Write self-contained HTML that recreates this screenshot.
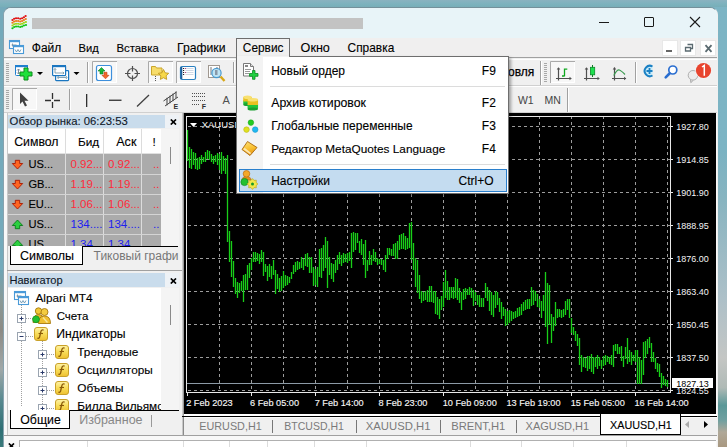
<!DOCTYPE html><html><head><meta charset="utf-8"><style>
*{margin:0;padding:0;box-sizing:border-box}
html,body{width:727px;height:447px;overflow:hidden}
body{background:linear-gradient(90deg,#74aabb,#78afbf 50%,#7cb4c4);font-family:"Liberation Sans",sans-serif;position:relative}
.a{position:absolute}
.t{position:absolute;white-space:nowrap;line-height:0}
</style></head><body>

<div class="a" style="left:0px;top:0px;width:727px;height:7px;background:linear-gradient(#8ab2c0,#7cb2bd 60%,#78aeb8)"></div>
<div class="a" style="left:0px;top:270px;width:3px;height:177px;background:linear-gradient(#6ea4b4,#8a9a98 17%,#8c8a84 34%,#a0a8a8 56%,#5a8a90 73%,#2f6f74 90%,#3a7a7a)"></div>
<div class="a" style="left:718px;top:150px;width:9px;height:297px;background:linear-gradient(#7ab2c2,#88b4c0 17%,#adc0c8 50%,#c4c6c4 70%,#b0bab6 80%,#5a9898 86%,#70a0a0 91%,#b0a898 95%,#a89880)"></div>
<div class="a" style="left:3px;top:7px;width:715px;height:445px;border-radius:8px 8px 0 0;background:#f8f8f8;border:1px solid #87a2ae;border-right-color:#f0f0f0;border-top-color:#74909a"></div>
<div class="a" style="left:4px;top:8px;width:713px;height:30px;border-radius:7px 7px 0 0;background:#e8f4f8"></div>
<div class="a" style="left:32px;top:18px;width:331px;height:11px;background:#c3c3c3"></div>
<svg class="a" style="left:0;top:0" width="40" height="40"><ellipse cx="12.50" cy="20.00" rx="1.15" ry="1.0" fill="#e01414"/><ellipse cx="14.17" cy="18.73" rx="1.15" ry="1.0" fill="#e01414"/><ellipse cx="16.06" cy="18.16" rx="1.15" ry="1.0" fill="#e01414"/><ellipse cx="18.15" cy="18.28" rx="1.15" ry="1.0" fill="#e01414"/><ellipse cx="20.21" cy="18.71" rx="1.15" ry="1.0" fill="#e01414"/><ellipse cx="22.10" cy="18.24" rx="1.15" ry="1.0" fill="#e01414"/><ellipse cx="23.90" cy="17.16" rx="1.15" ry="1.0" fill="#e01414"/><ellipse cx="25.60" cy="15.93" rx="1.15" ry="1.0" fill="#e01414"/><ellipse cx="12.50" cy="22.75" rx="1.15" ry="1.0" fill="#f07818"/><ellipse cx="14.17" cy="21.48" rx="1.15" ry="1.0" fill="#f07818"/><ellipse cx="16.06" cy="20.91" rx="1.15" ry="1.0" fill="#f07818"/><ellipse cx="18.15" cy="21.03" rx="1.15" ry="1.0" fill="#f07818"/><ellipse cx="20.21" cy="21.46" rx="1.15" ry="1.0" fill="#f07818"/><ellipse cx="22.10" cy="20.99" rx="1.15" ry="1.0" fill="#f07818"/><ellipse cx="23.90" cy="19.91" rx="1.15" ry="1.0" fill="#f07818"/><ellipse cx="25.75" cy="18.92" rx="1.15" ry="1.0" fill="#f07818"/><ellipse cx="12.50" cy="25.50" rx="1.15" ry="1.0" fill="#a0d414"/><ellipse cx="14.17" cy="24.23" rx="1.15" ry="1.0" fill="#a0d414"/><ellipse cx="16.06" cy="23.66" rx="1.15" ry="1.0" fill="#a0d414"/><ellipse cx="18.15" cy="23.78" rx="1.15" ry="1.0" fill="#a0d414"/><ellipse cx="20.21" cy="24.21" rx="1.15" ry="1.0" fill="#a0d414"/><ellipse cx="22.10" cy="23.74" rx="1.15" ry="1.0" fill="#a0d414"/><ellipse cx="23.90" cy="22.66" rx="1.15" ry="1.0" fill="#a0d414"/><ellipse cx="25.88" cy="21.97" rx="1.15" ry="1.0" fill="#a0d414"/><ellipse cx="12.50" cy="28.25" rx="1.15" ry="1.0" fill="#14c414"/><ellipse cx="14.17" cy="26.98" rx="1.15" ry="1.0" fill="#14c414"/><ellipse cx="16.06" cy="26.41" rx="1.15" ry="1.0" fill="#14c414"/><ellipse cx="18.15" cy="26.53" rx="1.15" ry="1.0" fill="#14c414"/><ellipse cx="20.21" cy="26.96" rx="1.15" ry="1.0" fill="#14c414"/><ellipse cx="22.10" cy="26.49" rx="1.15" ry="1.0" fill="#14c414"/><ellipse cx="23.90" cy="25.41" rx="1.15" ry="1.0" fill="#14c414"/><ellipse cx="25.97" cy="25.09" rx="1.15" ry="1.0" fill="#14c414"/></svg>
<div class="a" style="left:599px;top:22px;width:10px;height:1px;background:#1a1a1a"></div>
<div class="a" style="left:644px;top:17px;width:10px;height:10px;border:1px solid #1a1a1a;border-radius:1px"></div>
<svg class="a" style="left:689px;top:16px" width="12" height="12"><path d="M1 1L11 11M11 1L1 11" stroke="#1a1a1a" stroke-width="1.1"/></svg>
<div class="a" style="left:4px;top:38px;width:713px;height:19px;background:#f0efef"></div>
<div class="a" style="left:4px;top:57px;width:713px;height:1px;background:#a0a0a0"></div>
<svg class="a" style="left:8px;top:39px" width="17" height="17"><rect x="1.5" y="1.5" width="10" height="8" fill="#fff" stroke="#4a9ad8" stroke-width="1.1"/><rect x="1" y="1" width="11" height="2.2" fill="#4a9ad8"/><path d="M3.5 6h5M4.5 4.5v3" stroke="#6a8aa0" stroke-width="0.8"/><rect x="5.5" y="6.5" width="10" height="8" fill="#fff" stroke="#4a9ad8" stroke-width="1.1"/><rect x="5" y="6" width="11" height="2.2" fill="#4a9ad8"/><path d="M7 10.5l1.5 2.5 1.5-2.5 1.5 2.5 1.5-2.5" stroke="#5a8aa8" stroke-width="0.8" fill="none"/></svg>
<div class="t" style="left:31.8px;top:47.842px;font-size:12.0px;color:#000;-webkit-text-stroke:0.12px currentColor;">Файл</div>
<div class="t" style="left:78.6px;top:48.119px;font-size:11.2px;color:#000;-webkit-text-stroke:0.12px currentColor;">Вид</div>
<div class="t" style="left:116.4px;top:48.050px;font-size:11.4px;color:#000;-webkit-text-stroke:0.12px currentColor;">Вставка</div>
<div class="t" style="left:177px;top:47.773px;font-size:12.2px;color:#000;-webkit-text-stroke:0.12px currentColor;">Графики</div>
<div class="t" style="left:300.6px;top:47.634px;font-size:12.6px;color:#000;-webkit-text-stroke:0.12px currentColor;">Окно</div>
<div class="t" style="left:347.6px;top:47.877px;font-size:11.9px;color:#000;-webkit-text-stroke:0.12px currentColor;">Справка</div>
<div class="a" style="left:236px;top:38px;width:54px;height:19px;background:#f0f0f0;border:1px solid #6e6e6e;border-bottom:none"></div>
<div class="t" style="left:242.8px;top:47.877px;font-size:11.9px;color:#000;-webkit-text-stroke:0.12px currentColor;">Сервис</div>
<div class="a" style="left:662px;top:40px;width:16px;height:16px;background:#fff;border:1px solid #e8e8e8"></div>
<div class="a" style="left:680px;top:40px;width:16px;height:16px;background:#fff;border:1px solid #e8e8e8"></div>
<div class="a" style="left:700px;top:40px;width:16px;height:16px;background:#fff;border:1px solid #e8e8e8"></div>
<div class="a" style="left:666px;top:50px;width:6px;height:2px;background:#666"></div>
<svg class="a" style="left:684px;top:43px" width="10" height="10"><path d="M3.5 1.5h5v4h-2M1.5 4.5h5v3.5h-5z" fill="none" stroke="#5a6a70" stroke-width="1.3"/></svg>
<svg class="a" style="left:704px;top:44px" width="9" height="9"><path d="M1.5 1.2L7.5 7.8M7.5 1.2L1.5 7.8" stroke="#5a6a70" stroke-width="1.8"/></svg>
<div class="a" style="left:4px;top:58px;width:713px;height:27px;background:#f0f0f0"></div>
<div class="a" style="left:4px;top:85px;width:713px;height:1px;background:#d0d0d0"></div>
<div class="a" style="left:4px;top:86px;width:713px;height:26px;background:#f0f0f0"></div>
<div class="a" style="left:4px;top:112px;width:713px;height:1px;background:#d0d0d0"></div>
<svg class="a" style="left:0;top:0" width="727" height="113"><rect x="4" y="59" width="713" height="1" fill="#fff"/><rect x="4" y="86" width="713" height="1" fill="#fff"/><rect x="6" y="63" width="3" height="1" fill="#a8a8a8"/><rect x="6" y="65" width="3" height="1" fill="#a8a8a8"/><rect x="6" y="67" width="3" height="1" fill="#a8a8a8"/><rect x="6" y="69" width="3" height="1" fill="#a8a8a8"/><rect x="6" y="71" width="3" height="1" fill="#a8a8a8"/><rect x="6" y="73" width="3" height="1" fill="#a8a8a8"/><rect x="6" y="75" width="3" height="1" fill="#a8a8a8"/><rect x="6" y="77" width="3" height="1" fill="#a8a8a8"/><rect x="6" y="79" width="3" height="1" fill="#a8a8a8"/><rect x="6" y="81" width="3" height="1" fill="#a8a8a8"/><rect x="6" y="90" width="3" height="1" fill="#a8a8a8"/><rect x="6" y="92" width="3" height="1" fill="#a8a8a8"/><rect x="6" y="94" width="3" height="1" fill="#a8a8a8"/><rect x="6" y="96" width="3" height="1" fill="#a8a8a8"/><rect x="6" y="98" width="3" height="1" fill="#a8a8a8"/><rect x="6" y="100" width="3" height="1" fill="#a8a8a8"/><rect x="6" y="102" width="3" height="1" fill="#a8a8a8"/><rect x="6" y="104" width="3" height="1" fill="#a8a8a8"/><rect x="6" y="106" width="3" height="1" fill="#a8a8a8"/><rect x="6" y="108" width="3" height="1" fill="#a8a8a8"/><rect x="15.5" y="65.5" width="12" height="10" rx="1" fill="#fff" stroke="#1f7fd0"/><rect x="15" y="65" width="13" height="2.2" fill="#1f7fd0"/><path d="M18.5 69v5M17 70.5l1.5-1.5 1.5 1.5M17 72.5l1.5 1.5 1.5-1.5" stroke="#7a8a9a" fill="none" stroke-width="1"/><path d="M24 68h4v4h4v4h-4v4h-4v-4h-4v-4h4z" fill="#1ee03a" stroke="#0d8a1a" stroke-width="1"/><path d="M37 72h6l-3 3z" fill="#000"/><rect x="55.6" y="70.6" width="13" height="10" rx="0.8" fill="#fff" stroke="#1a76c0" stroke-width="1.2"/><path d="M58 77.5h8.5M58.5 76l-1 1.5 1 1.5M66 76l1 1.5-1 1.5" stroke="#7a98a8" stroke-width="0.9" fill="none"/><rect x="52.6" y="65.6" width="13" height="10" rx="0.8" fill="#fff" stroke="#1a76c0" stroke-width="1.2"/><rect x="52" y="65" width="14" height="2.2" fill="#1a76c0"/><path d="M55 68.5v4.5M55 73h8.5M53.8 69.8l1.2-1.3 1.2 1.3M62.8 71.8l1.2 1.2-1.2 1.2" stroke="#7a98a8" stroke-width="0.9" fill="none"/><path d="M73.5 72h6l-3 3z" fill="#000"/><rect x="87" y="62" width="1" height="21" fill="#a0a0a0"/><rect x="88" y="62" width="1" height="21" fill="#fff"/><rect x="92" y="61" width="25" height="22" fill="#f7f7f7"/><path d="M92.5 83V61.5H117" fill="none" stroke="#a9a9a9"/><path d="M93 82.5H116.5V62" fill="none" stroke="#fff"/><rect x="96.5" y="65.5" width="15" height="15" rx="2" fill="#fff" stroke="#3d8fdc" stroke-width="1.2"/><path d="M101.5 67.5l3.5 3.5h-2v3h-3v-3h-2z" fill="#19b83a" stroke="#0e7a26" stroke-width="0.6"/><path d="M105.5 78.8l3.5-3.5h-2v-3h-3v3h-2z" fill="#f26a2a" stroke="#c04010" stroke-width="0.6"/><circle cx="132.5" cy="73.5" r="5" fill="none" stroke="#505050" stroke-width="1.2"/><path d="M132.5 66v5.5M132.5 75.5v5.5M125 73.5h5.5M134.5 73.5h5.5" stroke="#505050" stroke-width="1.2"/><rect x="148" y="61" width="25" height="22" fill="#f7f7f7"/><path d="M148.5 83V61.5H173" fill="none" stroke="#a9a9a9"/><path d="M149 82.5H172.5V62" fill="none" stroke="#fff"/><path d="M151.5 66.5h4l1 1.5h5.5v7h-10.5z" fill="#f7dc6a" stroke="#c9a52a" stroke-width="1"/><path d="M163.5 69.5l1.6 3.3 3.6.5-2.6 2.5.6 3.6-3.2-1.7-3.2 1.7.6-3.6-2.6-2.5 3.6-.5z" fill="#f7d84a" stroke="#c09a20" stroke-width="0.9"/><rect x="155" y="76" width="1" height="1" fill="#555"/><rect x="155" y="78" width="1" height="1" fill="#555"/><rect x="155" y="80" width="1" height="1" fill="#555"/><rect x="176" y="61" width="25" height="22" fill="#f7f7f7"/><path d="M176.5 83V61.5H201" fill="none" stroke="#a9a9a9"/><path d="M177 82.5H200.5V62" fill="none" stroke="#fff"/><rect x="180.5" y="66.5" width="15" height="13" rx="1.5" fill="#fff" stroke="#2a80c0" stroke-width="1.2"/><rect x="180.5" y="67" width="1.8" height="12" fill="#1f5f9a"/><path d="M183 68.5h1.2M183 70.5h1.2M183 72.5h1.2M183 74.5h1.2" stroke="#222"/><path d="M185.5 68.5h8M185.5 70.5h8M185.5 72.5h8M185.5 74.5h8" stroke="#d0d8e4"/><path d="M185 68.5h1M185 72.5h1" stroke="#c04080"/><rect x="208.5" y="65.5" width="11" height="12" fill="#fff" stroke="#a09890"/><path d="M211 67v8M217 67v6" stroke="#555" stroke-width="0.8"/><path d="M220.5 76.5l4 4.5" stroke="#d8a818" stroke-width="2.4"/><circle cx="216.5" cy="73" r="4.6" fill="#bfe4f4" stroke="#4a9ad0" stroke-width="1.2"/><rect x="215" y="70" width="2.5" height="5" fill="#8898a8"/><rect x="233" y="62" width="1" height="21" fill="#a0a0a0"/><rect x="234" y="62" width="1" height="21" fill="#fff"/><rect x="540" y="61" width="1" height="24" fill="#a0a0a0"/><rect x="541" y="61" width="1" height="24" fill="#fff"/><rect x="544" y="63" width="3" height="1" fill="#a8a8a8"/><rect x="544" y="65" width="3" height="1" fill="#a8a8a8"/><rect x="544" y="67" width="3" height="1" fill="#a8a8a8"/><rect x="544" y="69" width="3" height="1" fill="#a8a8a8"/><rect x="544" y="71" width="3" height="1" fill="#a8a8a8"/><rect x="544" y="73" width="3" height="1" fill="#a8a8a8"/><rect x="544" y="75" width="3" height="1" fill="#a8a8a8"/><rect x="544" y="77" width="3" height="1" fill="#a8a8a8"/><rect x="544" y="79" width="3" height="1" fill="#a8a8a8"/><rect x="544" y="81" width="3" height="1" fill="#a8a8a8"/><rect x="550" y="61" width="25" height="22" fill="#f7f7f7"/><path d="M550.5 83V61.5H575" fill="none" stroke="#a9a9a9"/><path d="M551 82.5H574.5V62" fill="none" stroke="#fff"/><path d="M558.5 68v12.5M556.0 78.5h14" stroke="#505050" stroke-width="1.2" fill="none"/><path d="M556.7 69.5l1.8-2.3 1.8 2.3z" fill="#505050"/><path d="M569.5 76.7l2.3 1.8-2.3 1.8z" fill="#505050"/><path d="M586.5 68v12.5M584.0 78.5h14" stroke="#505050" stroke-width="1.2" fill="none"/><path d="M584.7 69.5l1.8-2.3 1.8 2.3z" fill="#505050"/><path d="M597.5 76.7l2.3 1.8-2.3 1.8z" fill="#505050"/><path d="M564.5 68.5v7.8M564.5 69.2h2.8M562 76h2.5" stroke="#10a820" stroke-width="1.3" fill="none"/><path d="M592.5 65v12" stroke="#107a20" stroke-width="1"/><rect x="590.5" y="67.3" width="4.2" height="7.5" fill="#1ee050" stroke="#0e8a2a" stroke-width="0.8"/><path d="M614.5 67.5v13M612 78.5h14" stroke="#505050" stroke-width="1.2" fill="none"/><path d="M612.7 69.5l1.8-2.3 1.8 2.3z" fill="#505050"/><path d="M624 76.7l2.3 1.8-2.3 1.8z" fill="#505050"/><path d="M613.8 75.5Q617 69.5 619.3 70 Q621 70.5 625 74.5" stroke="#3a9a50" stroke-width="1.2" fill="none"/><rect x="635" y="62" width="1" height="21" fill="#a0a0a0"/><rect x="636" y="62" width="1" height="21" fill="#fff"/><path d="M652.5 66.5A5.2 5.2 0 1 0 652.5 75.5" fill="#c8ecfa" stroke="#1a80c4" stroke-width="2"/><path d="M646.5 71h6M649.5 68v6" stroke="#1a80c4" stroke-width="1.8"/><circle cx="672.8" cy="70" r="4" fill="#fff" stroke="#2a6ed0" stroke-width="1.7"/><path d="M669.5 73.5l-3.8 3.8" stroke="#2a6ed0" stroke-width="2.6" stroke-linecap="round"/><path d="M690.5 79.5l0.3 3.2 2.6-2.5" fill="#e4e4e4" stroke="#9a9a9a" stroke-width="0.8"/><circle cx="693" cy="75.3" r="4.8" fill="#ececec" stroke="#a8a8a8" stroke-width="0.9"/><circle cx="703.5" cy="70.5" r="8.3" fill="#f4f4f4"/><circle cx="703.5" cy="70.5" r="7.6" fill="#e8442e"/><path d="M702 67l2.3-1.6v10.4" stroke="#fff" stroke-width="1.5" fill="none"/><rect x="12" y="88" width="25" height="22" fill="#f7f7f7"/><path d="M12.5 110V88.5H37" fill="none" stroke="#a9a9a9"/><path d="M13 109.5H36.5V89" fill="none" stroke="#fff"/><path d="M20 92.5v11.5l2.5-2.5 2.5 5 2-1-2.5-4.8h4z" fill="#404040"/><path d="M52.5 93v6M52.5 102v6M45 100.5h6M54 100.5h6" stroke="#303030" stroke-width="1.3"/><rect x="69" y="89" width="1" height="21" fill="#a0a0a0"/><rect x="70" y="89" width="1" height="21" fill="#fff"/><rect x="86" y="94" width="1.3" height="13" fill="#303030"/><rect x="109" y="99.6" width="12.5" height="1.3" fill="#303030"/><path d="M137 106.5L149 95" stroke="#404040" stroke-width="1.3"/><path d="M163.5 101L176.5 92M165 106L178 97" stroke="#454545" stroke-width="1"/><path d="M167 97.8v7.5M170 95.7v7.5M173 93.6v7.5M176 91.5v6.5" stroke="#454545" stroke-width="1"/><text x="173.6" y="108.8" font-family="Liberation Sans" font-weight="bold" font-size="7" fill="#303030">E</text><path d="M192 93.5H205.5" stroke="#505050" stroke-dasharray="1 1"/><path d="M192 96.5H205.5" stroke="#505050" stroke-dasharray="1 1"/><path d="M192 100.5H205.5" stroke="#505050" stroke-dasharray="1 1"/><path d="M192 104.5H200" stroke="#505050" stroke-dasharray="1 1"/><text x="201.8" y="108.9" font-family="Liberation Sans" font-weight="bold" font-size="7" fill="#303030">F</text><text x="222.5" y="104.4" font-family="Liberation Sans" font-size="11" fill="#505050">A</text><rect x="567" y="88" width="1" height="24" fill="#a0a0a0"/><rect x="568" y="88" width="1" height="24" fill="#fff"/></svg>
<div class="t" style="left:508.0px;top:71.842px;font-size:12px;color:#000;-webkit-text-stroke:0.25px #000;">овля</div>
<div class="t" style="left:517.9px;top:100.362px;font-size:10.5px;color:#444;">W1</div>
<div class="t" style="left:544.6px;top:100.362px;font-size:10.5px;color:#444;">MN</div>
<div class="a" style="left:7px;top:113px;width:176px;height:158px;background:#f0f0f0;border-left:1px solid #c8c8c8"></div>
<div class="a" style="left:8px;top:115px;width:157px;height:13px;background:#c9dcec"></div>
<div class="a" style="left:165px;top:115px;width:14px;height:13px;background:#eef2f6"></div>
<div class="t" style="left:9.6px;top:121.085px;font-size:11.3px;color:#101828;-webkit-text-stroke:0.12px currentColor;">Обзор рынка: 06:23:53</div>
<svg class="a" style="left:170px;top:119px" width="7" height="6"><path d="M0.8 0.5L6 5.5M6 0.5L0.8 5.5" stroke="#000" stroke-width="1.7"/></svg>
<div class="a" style="left:8px;top:129px;width:153px;height:117px;background:#ababab"></div>
<div class="a" style="left:8px;top:129px;width:153px;height:25px;background:#fff;border-bottom:1px solid #e0e0e0"></div>
<div class="a" style="left:161px;top:129px;width:18px;height:117px;background:#f4f4f4"></div>
<div class="a" style="left:170px;top:147px;width:1px;height:17px;background:#8a8a8a"></div>
<div class="a" style="left:65px;top:129px;width:1px;height:117px;background:#dcdcdc"></div>
<div class="a" style="left:103px;top:129px;width:1px;height:117px;background:#dcdcdc"></div>
<div class="a" style="left:141px;top:129px;width:1px;height:117px;background:#dcdcdc"></div>
<div class="a" style="left:8px;top:174px;width:153px;height:1px;background:#d4d4d4"></div>
<div class="a" style="left:8px;top:194px;width:153px;height:1px;background:#d4d4d4"></div>
<div class="a" style="left:8px;top:214px;width:153px;height:1px;background:#d4d4d4"></div>
<div class="a" style="left:8px;top:234px;width:153px;height:1px;background:#d4d4d4"></div>
<div class="t" style="left:14.2px;top:141.738px;font-size:12.3px;color:#000;-webkit-text-stroke:0.12px currentColor;">Символ</div>
<div class="t" style="left:78px;top:141.911px;font-size:11.8px;color:#000;-webkit-text-stroke:0.12px currentColor;">Бид</div>
<div class="t" style="left:116.2px;top:141.634px;font-size:12.6px;color:#000;-webkit-text-stroke:0.12px currentColor;">Аск</div>
<div class="t" style="left:152.5px;top:141.911px;font-size:11.8px;color:#000;-webkit-text-stroke:0.12px currentColor;">!</div>
<div class="t" style="left:28.4px;top:164.154px;font-size:11.1px;color:#000;-webkit-text-stroke:0.12px currentColor;">US...</div>
<div class="t" style="left:70.5px;top:164.015px;font-size:11.5px;color:#ff2a3a;">0.92...</div>
<div class="t" style="left:108px;top:164.015px;font-size:11.5px;color:#ff2a3a;">0.92...</div>
<div class="t" style="left:153px;top:164.015px;font-size:11.5px;color:#ff2a3a;">..</div>
<div class="t" style="left:28.4px;top:184.154px;font-size:11.1px;color:#000;-webkit-text-stroke:0.12px currentColor;">GB...</div>
<div class="t" style="left:70.5px;top:184.015px;font-size:11.5px;color:#ff2a3a;">1.19...</div>
<div class="t" style="left:108px;top:184.015px;font-size:11.5px;color:#ff2a3a;">1.19...</div>
<div class="t" style="left:153px;top:184.015px;font-size:11.5px;color:#ff2a3a;">..</div>
<div class="t" style="left:28.4px;top:204.154px;font-size:11.1px;color:#000;-webkit-text-stroke:0.12px currentColor;">EU...</div>
<div class="t" style="left:70.5px;top:204.015px;font-size:11.5px;color:#ff2a3a;">1.06...</div>
<div class="t" style="left:108px;top:204.015px;font-size:11.5px;color:#ff2a3a;">1.06...</div>
<div class="t" style="left:153px;top:204.015px;font-size:11.5px;color:#ff2a3a;">..</div>
<div class="t" style="left:28.4px;top:224.154px;font-size:11.1px;color:#000;-webkit-text-stroke:0.12px currentColor;">US...</div>
<div class="t" style="left:70.5px;top:224.015px;font-size:11.5px;color:#2020f0;">134....</div>
<div class="t" style="left:108px;top:224.015px;font-size:11.5px;color:#2020f0;">134....</div>
<div class="t" style="left:153px;top:224.015px;font-size:11.5px;color:#2020f0;">..</div>
<div class="t" style="left:28.4px;top:244.154px;font-size:11.1px;color:#000;-webkit-text-stroke:0.12px currentColor;">US...</div>
<div class="t" style="left:70.5px;top:244.015px;font-size:11.5px;color:#2020f0;">1.34...</div>
<div class="t" style="left:108px;top:244.015px;font-size:11.5px;color:#2020f0;">1.34...</div>
<div class="t" style="left:153px;top:244.015px;font-size:11.5px;color:#2020f0;">..</div>
<svg class="a" style="left:0;top:0" width="182" height="250"><path d="M15.3 160.3h4.4v3.2h3l-5.2 5.5-5.2-5.5h3z" fill="#ff6420" stroke="#a81800" stroke-width="0.9" stroke-linejoin="round"/><path d="M15.3 180.3h4.4v3.2h3l-5.2 5.5-5.2-5.5h3z" fill="#ff6420" stroke="#a81800" stroke-width="0.9" stroke-linejoin="round"/><path d="M15.3 200.3h4.4v3.2h3l-5.2 5.5-5.2-5.5h3z" fill="#ff6420" stroke="#a81800" stroke-width="0.9" stroke-linejoin="round"/><path d="M15.3 228.7h4.4v-3.2h3l-5.2-5.5-5.2 5.5h3z" fill="#2cd040" stroke="#0a7a18" stroke-width="0.9" stroke-linejoin="round"/><path d="M15.3 248.7h4.4v-3.2h3l-5.2-5.5-5.2 5.5h3z" fill="#2cd040" stroke="#0a7a18" stroke-width="0.9" stroke-linejoin="round"/></svg>
<div class="a" style="left:8px;top:246px;width:174px;height:24px;background:#f0f0f0"></div>
<div class="a" style="left:82px;top:246px;width:96px;height:1px;background:#000"></div>
<div class="a" style="left:10px;top:246px;width:73px;height:19px;background:#fff;border:1px solid #000;border-top:none"></div>
<div class="t" style="left:20.0px;top:255.669px;font-size:12.5px;color:#000;-webkit-text-stroke:0.12px currentColor;">Символы</div>
<div class="t" style="left:93.6px;top:255.842px;font-size:12px;color:#777;">Тиковый графи</div>
<div class="a" style="left:7px;top:270px;width:175px;height:1px;background:#a0a0a0"></div>
<div class="a" style="left:7px;top:271px;width:175px;height:164px;background:#f0f0f0;border-left:1px solid #c8c8c8"></div>
<div class="a" style="left:8px;top:273px;width:157px;height:14px;background:#c9dcec"></div>
<div class="a" style="left:165px;top:273px;width:14px;height:14px;background:#eef2f6"></div>
<div class="t" style="left:9.4px;top:280.154px;font-size:11.1px;color:#101828;-webkit-text-stroke:0.12px currentColor;">Навигатор</div>
<svg class="a" style="left:170px;top:278px" width="7" height="6"><path d="M0.8 0.5L6 5.5M6 0.5L0.8 5.5" stroke="#000" stroke-width="1.7"/></svg>
<div class="a" style="left:8px;top:288px;width:153px;height:122px;background:#fff"></div>
<div class="t" style="left:35.5px;top:297.911px;font-size:11.8px;color:#000;-webkit-text-stroke:0.12px currentColor;">Alpari MT4</div>
<div class="t" style="left:56.7px;top:316.015px;font-size:11.5px;color:#000;-webkit-text-stroke:0.12px currentColor;">Счета</div>
<div class="t" style="left:56.3px;top:333.773px;font-size:12.2px;color:#000;-webkit-text-stroke:0.12px currentColor;">Индикаторы</div>
<div class="t" style="left:77.3px;top:351.911px;font-size:11.8px;color:#000;-webkit-text-stroke:0.12px currentColor;">Трендовые</div>
<div class="t" style="left:77.3px;top:369.911px;font-size:11.8px;color:#000;-webkit-text-stroke:0.12px currentColor;">Осцилляторы</div>
<div class="t" style="left:77.3px;top:387.911px;font-size:11.8px;color:#000;-webkit-text-stroke:0.12px currentColor;">Объемы</div>
<div class="t" style="left:77.3px;top:405.911px;font-size:11.8px;color:#000;-webkit-text-stroke:0.12px currentColor;">Билла Вильямса</div>
<svg class="a" style="left:0;top:0" width="182" height="435"><path d="M21.5 305V407" stroke="#a0a0a0" stroke-dasharray="1 1"/><path d="M42.5 341V407" stroke="#a0a0a0" stroke-dasharray="1 1"/><path d="M26 318.5H33" stroke="#a0a0a0" stroke-dasharray="1 1"/><path d="M26 336.5H33" stroke="#a0a0a0" stroke-dasharray="1 1"/><path d="M47 354.5H54" stroke="#a0a0a0" stroke-dasharray="1 1"/><path d="M47 372.5H54" stroke="#a0a0a0" stroke-dasharray="1 1"/><path d="M47 390.5H54" stroke="#a0a0a0" stroke-dasharray="1 1"/><path d="M47 408.5H54" stroke="#a0a0a0" stroke-dasharray="1 1"/><rect x="17.5" y="314.5" width="8" height="8" fill="#fff" stroke="#9aa4b0"/><path d="M19.5 318.5h4" stroke="#2a3a6a"/><path d="M21.5 316.5v4" stroke="#2a3a6a"/><rect x="17.5" y="332.5" width="8" height="8" fill="#fff" stroke="#9aa4b0"/><path d="M19.5 336.5h4" stroke="#2a3a6a"/><rect x="38.5" y="350.5" width="8" height="8" fill="#fff" stroke="#9aa4b0"/><path d="M40.5 354.5h4" stroke="#2a3a6a"/><path d="M42.5 352.5v4" stroke="#2a3a6a"/><rect x="38.5" y="368.5" width="8" height="8" fill="#fff" stroke="#9aa4b0"/><path d="M40.5 372.5h4" stroke="#2a3a6a"/><path d="M42.5 370.5v4" stroke="#2a3a6a"/><rect x="38.5" y="386.5" width="8" height="8" fill="#fff" stroke="#9aa4b0"/><path d="M40.5 390.5h4" stroke="#2a3a6a"/><path d="M42.5 388.5v4" stroke="#2a3a6a"/><rect x="38.5" y="404.5" width="8" height="8" fill="#fff" stroke="#9aa4b0"/><path d="M40.5 408.5h4" stroke="#2a3a6a"/><path d="M42.5 406.5v4" stroke="#2a3a6a"/><rect x="14.5" y="291.5" width="11" height="8" fill="#fff" stroke="#4a9ad8" stroke-width="1.1"/><rect x="14" y="291" width="12" height="2.2" fill="#4a9ad8"/><path d="M16.5 296h5M17.5 294.5v3" stroke="#6a8aa0" stroke-width="0.8"/><rect x="18.5" y="296.5" width="10" height="8" fill="#fff" stroke="#4a9ad8" stroke-width="1.1"/><rect x="18" y="296" width="11" height="2.2" fill="#4a9ad8"/><path d="M20 300.5l1.5 2.5 1.5-2.5 1.5 2.5 1.5-2.5" stroke="#5a8aa8" stroke-width="0.8" fill="none"/><path d="M33 322.5Q33 314.5 38.5 314.5Q44 314.5 44 322.5z" fill="#e8b828" stroke="#a87a10" stroke-width="0.9"/><circle cx="38.5" cy="311" r="3.2" fill="#f2c838" stroke="#a87a10" stroke-width="0.9"/><path d="M38.5 323.5Q38.5 316 44.5 316Q50.5 316 50.5 323.5z" fill="#f0c030" stroke="#a87a10" stroke-width="0.9"/><circle cx="44.5" cy="312" r="3.5" fill="#f4cc40" stroke="#a87a10" stroke-width="0.9"/><path d="M43 317.5l4.5 5" stroke="#f8e8a0" stroke-width="1.3"/><circle cx="36" cy="319.3" r="3.4" fill="#22c030" stroke="#109020" stroke-width="0.7"/><defs><linearGradient id="fg" x1="0" y1="0" x2="0" y2="1"><stop offset="0" stop-color="#fff3a8"/><stop offset="0.5" stop-color="#f8dc58"/><stop offset="1" stop-color="#eec030"/></linearGradient></defs><rect x="34.5" y="327.5" width="13" height="13" rx="2.5" fill="url(#fg)" stroke="#c9a12a"/><path d="M43.6 330.3C42.6 329.5 41.2 329.9 40.9 331.6L39.6 337C39.2 338.4 38.3 338.6 37.4 338" fill="none" stroke="#8a5a08" stroke-width="1.3"/><path d="M38.6 333.5H43" stroke="#8a5a08" stroke-width="1.1"/><rect x="55.5" y="345.5" width="13" height="13" rx="2.5" fill="url(#fg)" stroke="#c9a12a"/><path d="M64.6 348.3C63.6 347.5 62.2 347.9 61.9 349.6L60.6 355C60.2 356.4 59.3 356.6 58.4 356" fill="none" stroke="#8a5a08" stroke-width="1.3"/><path d="M59.6 351.5H64" stroke="#8a5a08" stroke-width="1.1"/><rect x="55.5" y="363.5" width="13" height="13" rx="2.5" fill="url(#fg)" stroke="#c9a12a"/><path d="M64.6 366.3C63.6 365.5 62.2 365.9 61.9 367.6L60.6 373C60.2 374.4 59.3 374.6 58.4 374" fill="none" stroke="#8a5a08" stroke-width="1.3"/><path d="M59.6 369.5H64" stroke="#8a5a08" stroke-width="1.1"/><rect x="55.5" y="381.5" width="13" height="13" rx="2.5" fill="url(#fg)" stroke="#c9a12a"/><path d="M64.6 384.3C63.6 383.5 62.2 383.9 61.9 385.6L60.6 391C60.2 392.4 59.3 392.6 58.4 392" fill="none" stroke="#8a5a08" stroke-width="1.3"/><path d="M59.6 387.5H64" stroke="#8a5a08" stroke-width="1.1"/><rect x="55.5" y="399.5" width="13" height="13" rx="2.5" fill="url(#fg)" stroke="#c9a12a"/><path d="M64.6 402.3C63.6 401.5 62.2 401.9 61.9 403.6L60.6 409C60.2 410.4 59.3 410.6 58.4 410" fill="none" stroke="#8a5a08" stroke-width="1.3"/><path d="M59.6 405.5H64" stroke="#8a5a08" stroke-width="1.1"/></svg>
<div class="a" style="left:161px;top:288px;width:18px;height:122px;background:#f4f4f4"></div>
<div class="a" style="left:170px;top:305px;width:1px;height:20px;background:#8a8a8a"></div>
<div class="a" style="left:8px;top:410px;width:174px;height:25px;background:#f0f0f0"></div>
<div class="a" style="left:69px;top:410px;width:110px;height:1px;background:#000"></div>
<div class="a" style="left:10px;top:410px;width:60px;height:19px;background:#fff;border:1px solid #000;border-top:none"></div>
<div class="t" style="left:20.3px;top:419.738px;font-size:12.3px;color:#000;-webkit-text-stroke:0.12px currentColor;">Общие</div>
<div class="t" style="left:79.2px;top:419.669px;font-size:12.5px;color:#888;">Избранное</div>
<div class="a" style="left:151px;top:415px;width:1px;height:12px;background:#999"></div>
<div class="a" style="left:4px;top:435px;width:713px;height:1px;background:#a0a0a0"></div>
<div class="a" style="left:19px;top:440px;width:697px;height:7px;background:#fff;border-top:1px solid #b0b0b0;border-left:1px solid #b0b0b0"></div>
<div class="a" style="left:87px;top:441px;width:1px;height:6px;background:#dcdcdc"></div>
<div class="a" style="left:183px;top:441px;width:1px;height:6px;background:#dcdcdc"></div>
<div class="a" style="left:229px;top:441px;width:1px;height:6px;background:#dcdcdc"></div>
<div class="a" style="left:267px;top:441px;width:1px;height:6px;background:#dcdcdc"></div>
<div class="a" style="left:314px;top:441px;width:1px;height:6px;background:#dcdcdc"></div>
<div class="a" style="left:366px;top:441px;width:1px;height:6px;background:#dcdcdc"></div>
<div class="a" style="left:470px;top:441px;width:1px;height:6px;background:#dcdcdc"></div>
<div class="a" style="left:521px;top:441px;width:1px;height:6px;background:#dcdcdc"></div>
<div class="a" style="left:573px;top:441px;width:1px;height:6px;background:#dcdcdc"></div>
<div class="a" style="left:626px;top:441px;width:1px;height:6px;background:#dcdcdc"></div>
<svg class="a" style="left:8px;top:443px" width="7" height="6"><path d="M0.8 0.5L6 5.5M6 0.5L0.8 5.5" stroke="#000" stroke-width="1.7"/></svg>
<div class="a" style="left:184px;top:113px;width:532px;height:301px;background:#000"></div>
<svg class="a" style="left:0;top:0" width="727" height="447"><line x1="219.5" y1="116" x2="219.5" y2="392" stroke="#9c9c9c" stroke-dasharray="3 3"/><line x1="251.5" y1="116" x2="251.5" y2="392" stroke="#9c9c9c" stroke-dasharray="3 3"/><line x1="283.5" y1="116" x2="283.5" y2="392" stroke="#9c9c9c" stroke-dasharray="3 3"/><line x1="315.5" y1="116" x2="315.5" y2="392" stroke="#9c9c9c" stroke-dasharray="3 3"/><line x1="347.5" y1="116" x2="347.5" y2="392" stroke="#9c9c9c" stroke-dasharray="3 3"/><line x1="379.5" y1="116" x2="379.5" y2="392" stroke="#9c9c9c" stroke-dasharray="3 3"/><line x1="411.5" y1="116" x2="411.5" y2="392" stroke="#9c9c9c" stroke-dasharray="3 3"/><line x1="443.5" y1="116" x2="443.5" y2="392" stroke="#9c9c9c" stroke-dasharray="3 3"/><line x1="475.5" y1="116" x2="475.5" y2="392" stroke="#9c9c9c" stroke-dasharray="3 3"/><line x1="507.5" y1="116" x2="507.5" y2="392" stroke="#9c9c9c" stroke-dasharray="3 3"/><line x1="539.5" y1="116" x2="539.5" y2="392" stroke="#9c9c9c" stroke-dasharray="3 3"/><line x1="571.5" y1="116" x2="571.5" y2="392" stroke="#9c9c9c" stroke-dasharray="3 3"/><line x1="603.5" y1="116" x2="603.5" y2="392" stroke="#9c9c9c" stroke-dasharray="3 3"/><line x1="635.5" y1="116" x2="635.5" y2="392" stroke="#9c9c9c" stroke-dasharray="3 3"/><line x1="667.5" y1="116" x2="667.5" y2="392" stroke="#9c9c9c" stroke-dasharray="3 3"/><line x1="188" y1="126.5" x2="670" y2="126.5" stroke="#9c9c9c" stroke-dasharray="3 3"/><line x1="188" y1="159.5" x2="670" y2="159.5" stroke="#9c9c9c" stroke-dasharray="3 3"/><line x1="188" y1="192.5" x2="670" y2="192.5" stroke="#9c9c9c" stroke-dasharray="3 3"/><line x1="188" y1="225.5" x2="670" y2="225.5" stroke="#9c9c9c" stroke-dasharray="3 3"/><line x1="188" y1="258.5" x2="670" y2="258.5" stroke="#9c9c9c" stroke-dasharray="3 3"/><line x1="188" y1="291.5" x2="670" y2="291.5" stroke="#9c9c9c" stroke-dasharray="3 3"/><line x1="188" y1="324.5" x2="670" y2="324.5" stroke="#9c9c9c" stroke-dasharray="3 3"/><line x1="188" y1="357.5" x2="670" y2="357.5" stroke="#9c9c9c" stroke-dasharray="3 3"/><line x1="188" y1="390.5" x2="670" y2="390.5" stroke="#9c9c9c" stroke-dasharray="3 3"/><rect x="186.5" y="116.5" width="484" height="276" fill="none" stroke="#e8e8e8"/><line x1="670" y1="126.5" x2="673" y2="126.5" stroke="#e8e8e8"/><line x1="670" y1="159.5" x2="673" y2="159.5" stroke="#e8e8e8"/><line x1="670" y1="192.5" x2="673" y2="192.5" stroke="#e8e8e8"/><line x1="670" y1="225.5" x2="673" y2="225.5" stroke="#e8e8e8"/><line x1="670" y1="258.5" x2="673" y2="258.5" stroke="#e8e8e8"/><line x1="670" y1="291.5" x2="673" y2="291.5" stroke="#e8e8e8"/><line x1="670" y1="324.5" x2="673" y2="324.5" stroke="#e8e8e8"/><line x1="670" y1="357.5" x2="673" y2="357.5" stroke="#e8e8e8"/><line x1="670" y1="390.5" x2="673" y2="390.5" stroke="#e8e8e8"/><line x1="187.5" y1="392" x2="187.5" y2="396" stroke="#e8e8e8"/><line x1="251.5" y1="392" x2="251.5" y2="396" stroke="#e8e8e8"/><line x1="315.5" y1="392" x2="315.5" y2="396" stroke="#e8e8e8"/><line x1="379.5" y1="392" x2="379.5" y2="396" stroke="#e8e8e8"/><line x1="443.5" y1="392" x2="443.5" y2="396" stroke="#e8e8e8"/><line x1="507.5" y1="392" x2="507.5" y2="396" stroke="#e8e8e8"/><line x1="571.5" y1="392" x2="571.5" y2="396" stroke="#e8e8e8"/><line x1="635.5" y1="392" x2="635.5" y2="396" stroke="#e8e8e8"/><line x1="187" y1="383.5" x2="670" y2="383.5" stroke="#8c9aa6"/><path d="M186.85 130h1.3v31h-1.3zM188.85 147h1.3v21h-1.3zM190.85 149h1.3v20h-1.3zM192.85 152h1.3v13h-1.3zM194.85 153h1.3v16h-1.3zM196.85 158h1.3v12h-1.3zM198.85 157h1.3v12h-1.3zM200.85 155h1.3v9h-1.3zM202.85 157h1.3v5h-1.3zM204.85 152h1.3v10h-1.3zM206.85 150h1.3v9h-1.3zM208.85 151h1.3v9h-1.3zM210.85 154h1.3v8h-1.3zM212.85 156h1.3v8h-1.3zM214.85 155h1.3v7h-1.3zM216.85 153h1.3v12h-1.3zM218.85 154h1.3v16h-1.3zM220.85 152h1.3v22h-1.3zM222.85 156h1.3v15h-1.3zM224.85 158h1.3v16h-1.3zM226.85 155h1.3v87h-1.3zM228.85 231h1.3v31h-1.3zM230.85 241h1.3v36h-1.3zM232.85 261h1.3v26h-1.3zM234.85 278h1.3v16h-1.3zM236.85 282h1.3v16h-1.3zM238.85 283h1.3v10h-1.3zM240.85 281h1.3v10h-1.3zM242.85 275h1.3v27h-1.3zM244.85 274h1.3v16h-1.3zM246.85 265h1.3v25h-1.3zM248.85 263h1.3v15h-1.3zM250.85 258h1.3v12h-1.3zM252.85 252h1.3v10h-1.3zM254.85 252h1.3v10h-1.3zM256.85 253h1.3v8h-1.3zM258.85 254h1.3v10h-1.3zM260.85 250h1.3v12h-1.3zM262.85 252h1.3v24h-1.3zM264.85 264h1.3v8h-1.3zM266.85 266h1.3v15h-1.3zM268.85 264h1.3v13h-1.3zM270.85 266h1.3v13h-1.3zM272.85 260h1.3v15h-1.3zM274.85 270h1.3v24h-1.3zM276.85 274h1.3v15h-1.3zM278.85 278h1.3v14h-1.3zM280.85 276h1.3v15h-1.3zM282.85 271h1.3v17h-1.3zM284.85 275h1.3v11h-1.3zM286.85 276h1.3v9h-1.3zM288.85 277h1.3v6h-1.3zM290.85 272h1.3v7h-1.3zM292.85 265h1.3v9h-1.3zM294.85 262h1.3v10h-1.3zM296.85 261h1.3v9h-1.3zM298.85 262h1.3v7h-1.3zM300.85 257h1.3v11h-1.3zM302.85 259h1.3v11h-1.3zM304.85 254h1.3v12h-1.3zM306.85 253h1.3v14h-1.3zM308.85 257h1.3v16h-1.3zM310.85 257h1.3v16h-1.3zM312.85 267h1.3v19h-1.3zM314.85 269h1.3v16h-1.3zM316.85 267h1.3v20h-1.3zM318.85 249h1.3v28h-1.3zM320.85 248h1.3v30h-1.3zM322.85 245h1.3v26h-1.3zM324.85 237h1.3v31h-1.3zM326.85 241h1.3v47h-1.3zM328.85 257h1.3v18h-1.3zM330.85 263h1.3v16h-1.3zM332.85 264h1.3v18h-1.3zM334.85 260h1.3v13h-1.3zM336.85 255h1.3v15h-1.3zM338.85 252h1.3v12h-1.3zM340.85 255h1.3v11h-1.3zM342.85 253h1.3v10h-1.3zM344.85 254h1.3v8h-1.3zM346.85 253h1.3v10h-1.3zM348.85 252h1.3v9h-1.3zM350.85 233h1.3v35h-1.3zM352.85 232h1.3v20h-1.3zM354.85 233h1.3v17h-1.3zM356.85 233h1.3v10h-1.3zM358.85 241h1.3v12h-1.3zM360.85 239h1.3v16h-1.3zM362.85 244h1.3v21h-1.3zM364.85 240h1.3v38h-1.3zM366.85 260h1.3v11h-1.3zM368.85 251h1.3v14h-1.3zM370.85 255h1.3v10h-1.3zM372.85 249h1.3v12h-1.3zM374.85 252h1.3v10h-1.3zM376.85 258h1.3v7h-1.3zM378.85 259h1.3v5h-1.3zM380.85 259h1.3v6h-1.3zM382.85 260h1.3v10h-1.3zM384.85 255h1.3v17h-1.3zM386.85 248h1.3v11h-1.3zM388.85 248h1.3v7h-1.3zM390.85 249h1.3v7h-1.3zM392.85 244h1.3v12h-1.3zM394.85 243h1.3v16h-1.3zM396.85 241h1.3v18h-1.3zM398.85 235h1.3v15h-1.3zM400.85 234h1.3v15h-1.3zM402.85 233h1.3v16h-1.3zM404.85 236h1.3v14h-1.3zM406.85 238h1.3v11h-1.3zM408.85 223h1.3v25h-1.3zM410.85 222h1.3v38h-1.3zM412.85 243h1.3v27h-1.3zM414.85 258h1.3v29h-1.3zM416.85 260h1.3v33h-1.3zM418.85 275h1.3v24h-1.3zM420.85 291h1.3v12h-1.3zM422.85 292h1.3v9h-1.3zM424.85 291h1.3v9h-1.3zM426.85 290h1.3v12h-1.3zM428.85 286h1.3v16h-1.3zM430.85 286h1.3v16h-1.3zM432.85 291h1.3v12h-1.3zM434.85 291h1.3v23h-1.3zM436.85 297h1.3v18h-1.3zM438.85 299h1.3v20h-1.3zM440.85 296h1.3v14h-1.3zM442.85 282h1.3v25h-1.3zM444.85 270h1.3v28h-1.3zM446.85 281h1.3v19h-1.3zM448.85 287h1.3v13h-1.3zM450.85 287h1.3v11h-1.3zM452.85 287h1.3v12h-1.3zM454.85 278h1.3v20h-1.3zM456.85 279h1.3v21h-1.3zM458.85 288h1.3v15h-1.3zM460.85 292h1.3v18h-1.3zM462.85 289h1.3v11h-1.3zM464.85 288h1.3v11h-1.3zM466.85 289h1.3v6h-1.3zM468.85 287h1.3v8h-1.3zM470.85 288h1.3v10h-1.3zM472.85 290h1.3v16h-1.3zM474.85 292h1.3v9h-1.3zM476.85 295h1.3v10h-1.3zM478.85 295h1.3v12h-1.3zM480.85 298h1.3v9h-1.3zM482.85 298h1.3v9h-1.3zM484.85 283h1.3v15h-1.3zM486.85 287h1.3v14h-1.3zM488.85 290h1.3v21h-1.3zM490.85 292h1.3v23h-1.3zM492.85 295h1.3v22h-1.3zM494.85 291h1.3v17h-1.3zM496.85 292h1.3v13h-1.3zM498.85 298h1.3v14h-1.3zM500.85 302h1.3v17h-1.3zM502.85 307h1.3v9h-1.3zM504.85 309h1.3v17h-1.3zM506.85 311h1.3v14h-1.3zM508.85 310h1.3v13h-1.3zM510.85 311h1.3v10h-1.3zM512.85 312h1.3v7h-1.3zM514.85 311h1.3v7h-1.3zM516.85 308h1.3v9h-1.3zM518.85 307h1.3v9h-1.3zM520.85 304h1.3v11h-1.3zM522.85 302h1.3v9h-1.3zM524.85 300h1.3v10h-1.3zM526.85 299h1.3v10h-1.3zM528.85 299h1.3v10h-1.3zM530.85 287h1.3v19h-1.3zM532.85 290h1.3v15h-1.3zM534.85 291h1.3v10h-1.3zM536.85 294h1.3v13h-1.3zM538.85 299h1.3v9h-1.3zM540.85 301h1.3v17h-1.3zM542.85 295h1.3v16h-1.3zM544.85 272h1.3v55h-1.3zM546.85 283h1.3v61h-1.3zM548.85 285h1.3v40h-1.3zM550.85 314h1.3v29h-1.3zM552.85 317h1.3v14h-1.3zM554.85 302h1.3v24h-1.3zM556.85 309h1.3v9h-1.3zM558.85 309h1.3v8h-1.3zM560.85 310h1.3v8h-1.3zM562.85 309h1.3v8h-1.3zM564.85 301h1.3v14h-1.3zM566.85 299h1.3v11h-1.3zM568.85 299h1.3v19h-1.3zM570.85 318h1.3v15h-1.3zM572.85 327h1.3v8h-1.3zM574.85 331h1.3v10h-1.3zM576.85 334h1.3v12h-1.3zM578.85 338h1.3v27h-1.3zM580.85 355h1.3v17h-1.3zM582.85 357h1.3v10h-1.3zM584.85 358h1.3v10h-1.3zM586.85 356h1.3v15h-1.3zM588.85 356h1.3v13h-1.3zM590.85 354h1.3v18h-1.3zM592.85 357h1.3v17h-1.3zM594.85 357h1.3v10h-1.3zM596.85 355h1.3v14h-1.3zM598.85 357h1.3v9h-1.3zM600.85 360h1.3v9h-1.3zM602.85 356h1.3v10h-1.3zM604.85 355h1.3v10h-1.3zM606.85 356h1.3v6h-1.3zM608.85 357h1.3v7h-1.3zM610.85 355h1.3v10h-1.3zM612.85 345h1.3v22h-1.3zM614.85 344h1.3v7h-1.3zM616.85 344h1.3v10h-1.3zM618.85 347h1.3v7h-1.3zM620.85 346h1.3v15h-1.3zM622.85 356h1.3v11h-1.3zM624.85 347h1.3v12h-1.3zM626.85 338h1.3v26h-1.3zM628.85 350h1.3v12h-1.3zM630.85 352h1.3v13h-1.3zM632.85 355h1.3v6h-1.3zM634.85 350h1.3v12h-1.3zM636.85 350h1.3v34h-1.3zM638.85 357h1.3v27h-1.3zM640.85 360h1.3v24h-1.3zM642.85 342h1.3v33h-1.3zM644.85 341h1.3v17h-1.3zM646.85 339h1.3v15h-1.3zM648.85 337h1.3v11h-1.3zM650.85 343h1.3v19h-1.3zM652.85 352h1.3v10h-1.3zM654.85 358h1.3v11h-1.3zM656.85 363h1.3v9h-1.3zM658.85 364h1.3v13h-1.3zM660.85 373h1.3v15h-1.3zM662.85 376h1.3v9h-1.3zM664.85 379h1.3v7h-1.3zM666.85 380h1.3v7h-1.3z" fill="#19cf19"/></svg>
<div class="t" style="left:676.3px;top:126.882px;font-size:9px;color:#f4f4f4;">1927.80</div>
<div class="t" style="left:676.3px;top:159.881px;font-size:9px;color:#f4f4f4;">1914.85</div>
<div class="t" style="left:676.3px;top:192.881px;font-size:9px;color:#f4f4f4;">1901.90</div>
<div class="t" style="left:676.3px;top:225.881px;font-size:9px;color:#f4f4f4;">1888.95</div>
<div class="t" style="left:676.3px;top:258.882px;font-size:9px;color:#f4f4f4;">1876.00</div>
<div class="t" style="left:676.3px;top:291.882px;font-size:9px;color:#f4f4f4;">1863.40</div>
<div class="t" style="left:676.3px;top:324.882px;font-size:9px;color:#f4f4f4;">1850.45</div>
<div class="t" style="left:676.3px;top:357.882px;font-size:9px;color:#f4f4f4;">1837.50</div>
<div class="t" style="left:676.3px;top:390.882px;font-size:9px;color:#f4f4f4;">1824.55</div>
<div class="a" style="left:672px;top:378px;width:41px;height:10px;background:#fff"></div>
<div class="t" style="left:676.3px;top:383.882px;font-size:9px;color:#000;">1827.13</div>
<div class="t" style="left:186.2px;top:402.812px;font-size:9.2px;color:#f4f4f4;-webkit-text-stroke:0.15px #f4f4f4;">2 Feb 2023</div>
<div class="t" style="left:250px;top:402.812px;font-size:9.2px;color:#f4f4f4;-webkit-text-stroke:0.15px #f4f4f4;">6 Feb 05:00</div>
<div class="t" style="left:314.7px;top:402.812px;font-size:9.2px;color:#f4f4f4;-webkit-text-stroke:0.15px #f4f4f4;">7 Feb 14:00</div>
<div class="t" style="left:378.4px;top:402.812px;font-size:9.2px;color:#f4f4f4;-webkit-text-stroke:0.15px #f4f4f4;">8 Feb 23:00</div>
<div class="t" style="left:442.7px;top:402.812px;font-size:9.2px;color:#f4f4f4;-webkit-text-stroke:0.15px #f4f4f4;">10 Feb 09:00</div>
<div class="t" style="left:506.4px;top:402.812px;font-size:9.2px;color:#f4f4f4;-webkit-text-stroke:0.15px #f4f4f4;">13 Feb 19:00</div>
<div class="t" style="left:570.7px;top:402.812px;font-size:9.2px;color:#f4f4f4;-webkit-text-stroke:0.15px #f4f4f4;">15 Feb 05:00</div>
<div class="t" style="left:634.5px;top:402.812px;font-size:9.2px;color:#f4f4f4;-webkit-text-stroke:0.15px #f4f4f4;">16 Feb 14:00</div>
<svg class="a" style="left:190px;top:123px" width="8" height="5"><path d="M0 0h7l-3.5 4z" fill="#fff"/></svg>
<div class="t" style="left:201.7px;top:124.708px;font-size:9.5px;color:#f4f4f4;">XAUUSD,H1</div>
<div class="a" style="left:182px;top:113px;width:1px;height:322px;background:#c8c8c8"></div>
<div class="a" style="left:183px;top:113px;width:1px;height:322px;background:#9a9a9a"></div>
<div class="a" style="left:184px;top:414px;width:533px;height:2px;background:#fff"></div>
<div class="a" style="left:183px;top:416px;width:534px;height:19px;background:#f0f0f0"></div>
<div class="a" style="left:182px;top:416px;width:535px;height:1px;background:#000"></div>
<div class="a" style="left:184px;top:417px;width:533px;height:1px;background:#fafafa"></div>
<div class="a" style="left:183px;top:417px;width:1px;height:18px;background:#8a8a8a"></div>
<div class="t" style="left:199.3px;top:426.258px;font-size:10.8px;color:#7a7a7a;">EURUSD,H1</div>
<div class="t" style="left:284.3px;top:426.362px;font-size:10.5px;color:#7a7a7a;">BTCUSD,H1</div>
<div class="t" style="left:365.8px;top:426.085px;font-size:11.3px;color:#7a7a7a;">XAUUSD,H1</div>
<div class="t" style="left:451.2px;top:426.119px;font-size:11.2px;color:#7a7a7a;">BRENT,H1</div>
<div class="t" style="left:525.6px;top:426.188px;font-size:11px;color:#7a7a7a;">XAGUSD,H1</div>
<div class="a" style="left:272px;top:420px;width:1px;height:13px;background:#777"></div>
<div class="a" style="left:356px;top:420px;width:1px;height:13px;background:#777"></div>
<div class="a" style="left:440px;top:420px;width:1px;height:13px;background:#777"></div>
<div class="a" style="left:516px;top:420px;width:1px;height:13px;background:#777"></div>
<div class="a" style="left:600px;top:414px;width:81px;height:21px;background:#fff;border:1px solid #000;border-top:none"></div>
<div class="t" style="left:610px;top:425.258px;font-size:10.8px;color:#000;-webkit-text-stroke:0.12px currentColor;">XAUUSD,H1</div>
<svg class="a" style="left:684px;top:421px" width="6" height="8"><path d="M5 0v7l-4-3.5z" fill="#aaa"/></svg>
<svg class="a" style="left:703px;top:421px" width="6" height="8"><path d="M1 0v7l4-3.5z" fill="#000"/></svg>
<div class="a" style="left:236px;top:56px;width:273px;height:138px;background:#fff;border:1px solid #6e6e6e;box-shadow:2px 2px 3px rgba(0,0,0,0.35)"></div>
<div class="a" style="left:237px;top:57px;width:26px;height:136px;background:#f3f3f3"></div>
<div class="a" style="left:237px;top:56px;width:52px;height:1px;background:#f3f3f3"></div>
<div class="a" style="left:270px;top:86px;width:235px;height:1px;background:#dcdcdc"></div>
<div class="a" style="left:270px;top:164px;width:235px;height:1px;background:#dcdcdc"></div>
<div class="a" style="left:239px;top:169px;width:268px;height:23px;background:#c4dcf0;border:1px solid #2a7fcc"></div>
<div class="t" style="left:271.2px;top:70.842px;font-size:12px;color:#000;-webkit-text-stroke:0.12px currentColor;">Новый ордер</div>
<div class="t" style="left:481.8px;top:70.842px;font-size:12px;color:#000;-webkit-text-stroke:0.12px currentColor;">F9</div>
<div class="t" style="left:271.2px;top:102.738px;font-size:12.3px;color:#000;-webkit-text-stroke:0.12px currentColor;">Архив котировок</div>
<div class="t" style="left:481.8px;top:102.842px;font-size:12px;color:#000;-webkit-text-stroke:0.12px currentColor;">F2</div>
<div class="t" style="left:271.2px;top:125.842px;font-size:12px;color:#000;-webkit-text-stroke:0.12px currentColor;">Глобальные переменные</div>
<div class="t" style="left:481.8px;top:125.842px;font-size:12px;color:#000;-webkit-text-stroke:0.12px currentColor;">F3</div>
<div class="t" style="left:271.2px;top:148.911px;font-size:11.8px;color:#000;-webkit-text-stroke:0.12px currentColor;">Редактор MetaQuotes Language</div>
<div class="t" style="left:481.8px;top:148.842px;font-size:12px;color:#000;-webkit-text-stroke:0.12px currentColor;">F4</div>
<div class="t" style="left:271.2px;top:180.842px;font-size:12px;color:#000;-webkit-text-stroke:0.12px currentColor;">Настройки</div>
<div class="t" style="left:458.6px;top:180.842px;font-size:12px;color:#000;-webkit-text-stroke:0.12px currentColor;">Ctrl+O</div>
<svg class="a" style="left:0;top:0" width="727" height="200"><path d="M243.5 63.5h7l3 3v9.5h-10z" fill="#fff" stroke="#7a7a7a"/><path d="M250.5 63.5v3h3" fill="#ddd" stroke="#7a7a7a"/><rect x="245" y="65" width="3" height="2" fill="#888"/><path d="M245 69.5h6M245 71.5h5M245 73.5h4" stroke="#999"/><path d="M252.5 70.5h2.5v3h3v2.8h-3v3h-2.5v-3h-3v-2.8h3z" fill="#20d040" stroke="#0a8a20" stroke-width="0.8"/><rect x="243.25" y="100.0" width="8.5" height="4.5" rx="1" fill="#22c43a"/><ellipse cx="247.5" cy="104.5" rx="4.25" ry="1.5" fill="#1aa030"/><rect x="243.25" y="97.0" width="8.5" height="4.5" fill="#e8c020"/><ellipse cx="247.5" cy="97.3" rx="4.25" ry="1.8" fill="#f8e070"/><rect x="247.55" y="103.5" width="10.5" height="5.5" rx="1" fill="#22c43a"/><ellipse cx="252.8" cy="109" rx="5.25" ry="1.5" fill="#1aa030"/><rect x="247.55" y="99.5" width="10.5" height="5.5" fill="#e8c020"/><ellipse cx="252.8" cy="99.8" rx="5.25" ry="1.8" fill="#f8e070"/><circle cx="250.9" cy="122.6" r="2.8" fill="#22cc22" stroke="#18a018" stroke-width="0.5"/><circle cx="246.5" cy="129.6" r="2.8" fill="#e0e020" stroke="#b0b010" stroke-width="0.5"/><circle cx="255.2" cy="129.6" r="2.8" fill="#20b8f0" stroke="#1090c8" stroke-width="0.5"/><defs><linearGradient id="meg" x1="0" y1="0" x2="0.3" y2="1"><stop offset="0" stop-color="#ffe27a"/><stop offset="0.6" stop-color="#f8c030"/><stop offset="1" stop-color="#e89818"/></linearGradient></defs><path d="M247.5 141.5L257 147.5L250 155.5L242 149.5z" fill="url(#meg)" stroke="#a86810" stroke-width="0.9" stroke-linejoin="round"/><path d="M243.2 149.2L250 154.3L251.2 153L244.6 147.8z" fill="#fbe6b0"/><path d="M242 180Q242 176.5 246.5 176.5Q251 176.5 251 180z" fill="#e89018" stroke="#b06010" stroke-width="0.6"/><circle cx="246.5" cy="173.8" r="3.3" fill="#f4a828" stroke="#b86a10" stroke-width="0.7"/><circle cx="244.5" cy="182" r="3.6" fill="#22c030" stroke="#108a20" stroke-width="0.7"/><path d="M257.90 184.00L256.10 185.49L256.32 187.82L253.99 187.60L252.50 189.40L251.01 187.60L248.68 187.82L248.90 185.49L247.10 184.00L248.90 182.51L248.68 180.18L251.01 180.40L252.50 178.60L253.99 180.40L256.32 180.18L256.10 182.51z" fill="#f2e848" stroke="#c0a818" stroke-width="0.7"/><circle cx="252.5" cy="184" r="1.5" fill="#1a9a2a"/></svg>
</body></html>
